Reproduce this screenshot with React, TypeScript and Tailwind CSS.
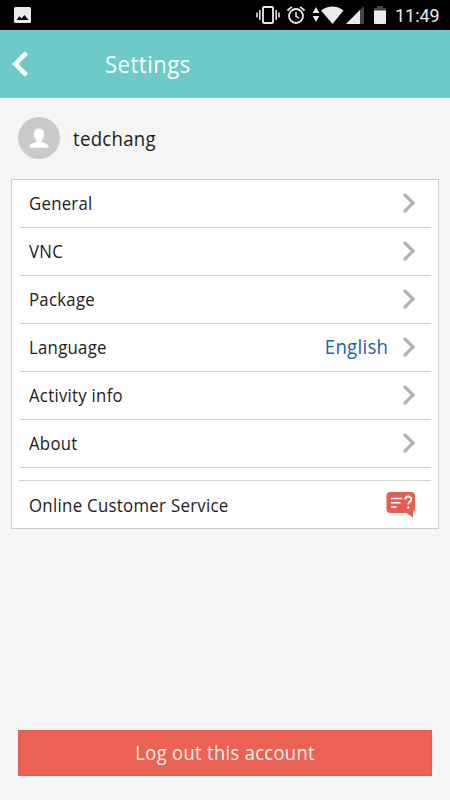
type Item = {
  label: string
  value?: string
}

const items: Item[] = [
  { label: 'General' },
  { label: 'VNC' },
  { label: 'Package' },
  { label: 'Language', value: 'English' },
  { label: 'Activity info' },
  { label: 'About' },
]

function StatusBar() {
  return (
    <div className="flex h-[30px] shrink-0 items-center bg-black pl-[14px] pr-[10px] text-[#ebebeb]">
      <svg width="17" height="16" viewBox="0 0 17 16">
        <rect width="17" height="16" rx="1.5" fill="currentColor" />
        <path d="M2.500 13l2.800-3.800 2.200 2.300L10.500 8l4 5z" fill="#000" />
      </svg>
      {/* vibrate */}
      <svg className="ml-auto" width="24" height="20" viewBox="0 0 24 20">
        <rect x="7" y="2" width="10" height="16" rx="1" fill="none" stroke="currentColor" strokeWidth="1.8" />
        <path d="M3.8 5v10M1 7.5v5M20.2 5v10M23 7.5v5" stroke="currentColor" strokeWidth="1.5" />
      </svg>
      {/* alarm */}
      <svg className="ml-[6px]" width="20" height="20" viewBox="0 0 20 20" fill="none" stroke="currentColor">
        <circle cx="10" cy="11" r="7" strokeWidth="1.8" />
        <path d="M10 7v4.3l3.2 1.9" strokeWidth="1.5" />
        <path d="M1.5 5.5l4.2-3.6M18.5 5.5l-4.2-3.6" strokeWidth="1.7" />
      </svg>
      <svg className="ml-[6px]" width="8" height="16" viewBox="0 0 8 16" fill="currentColor">
        <path d="M4 0l3.300 6H.7zM4 15L.7 9h6.600z" />
      </svg>
      <svg className="ml-[1px]" width="24" height="18" viewBox="0 0 24 18" fill="currentColor">
        <path d="M0 4.500C7-1 16-1 22.500 4.500L11.500 18z" />
      </svg>
      <svg className="ml-[1px]" width="19" height="18" viewBox="0 0 19 18">
        <path d="M18 0v18H0z" fill="#444" />
        <path d="M14 4v14H0z" fill="currentColor" />
      </svg>
      <svg className="ml-[9px]" width="12" height="18" viewBox="0 0 12 18">
        <path d="M0 2h3V0h6v2h3v3H0z" fill="#444" />
        <path d="M0 4.500h12v12.500a1 1 0 0 1-1 1H1a1 1 0 0 1-1-1z" fill="currentColor" />
      </svg>
      <span className="ml-[9px] w-[45px] origin-left scale-x-[0.97] whitespace-nowrap pt-0.5 font-['Roboto'] text-[18.5px] leading-[28px]">
        11:49
      </span>
    </div>
  )
}

function Header() {
  return (
    <header className="flex h-[68px] shrink-0 items-center bg-[#6dcac9] pl-3 text-white">
      <svg width="17" height="26" viewBox="0 0 17 26" fill="none" stroke="currentColor" strokeWidth="4.6">
        <path d="M14.500 1.800L3.300 13l11.200 11.200" />
      </svg>
      <h1 className="ml-[76px] origin-left scale-x-[0.94] text-[23.5px] leading-8 tracking-[0.5px]">
        Settings
      </h1>
    </header>
  )
}

function Chevron() {
  return (
    <svg
      className="mb-px"
      width="14"
      height="20"
      viewBox="0 0 14 20"
      fill="none"
      stroke="#b2b2b2"
      strokeWidth="3.2"
      strokeLinecap="round"
    >
      <path d="M3 2l8 8-8 8" strokeLinejoin="miter" />
    </svg>
  )
}

function ServiceIcon() {
  return (
    <svg width="30" height="26" viewBox="0 0 30 26">
      <path
        d="M4.500 0h20.500a4 4 0 0 1 4 4v12.500a4 4 0 0 1-2 3.500v5.500L20.500 21h-16a4 4 0 0 1-4-4V4a4 4 0 0 1 4-4z"
        fill="#e85d50"
      />
      <path d="M5 6.500h11M5 10.700h9.500M5 15h5.500" stroke="#fff" strokeWidth="1.600" fill="none" />
      <path
        d="M19.300 7.500c0-4 6-3.800 6-.3 0 2.500-3 2.500-3 5.300"
        fill="none"
        stroke="#fff"
        strokeWidth="1.900"
      />
      <circle cx="22.300" cy="15.500" r="1.200" fill="#fff" />
    </svg>
  )
}

export default function App() {
  return (
    <div className="flex h-[800px] w-[450px] flex-col overflow-hidden bg-[#f5f5f5] font-['Open_Sans','Noto_Sans',sans-serif] text-[#1c1c1c]">
      <StatusBar />
      <Header />

      <div className="mt-[19px] flex h-[42px] shrink-0 items-center pl-[18px]">
        <svg width="42" height="42" viewBox="0 0 42 42">
          <circle cx="21" cy="21" r="21" fill="#cacaca" />
          <path
            d="M21 11.500c3.400 0 5.200 2.300 5.200 5.700 0 2.600-1 4.800-2.500 6v1.600c1.500 1.200 6.800 1.200 7 6H11.400c.2-4.800 5.400-4.800 6.900-6v-1.600c-1.500-1.200-2.500-3.400-2.500-6 0-3.400 1.800-5.700 5.200-5.700z"
            fill="#fff"
          />
        </svg>
        <span className="ml-[13px] origin-left scale-x-[0.93] pt-0.5 text-[20px] leading-7 tracking-[0.3px]">
          tedchang
        </span>
      </div>

      <main className="mx-[11px] mt-5 border border-[#cdcdcd] bg-white px-[7px]">
        {items.map(({ label, value }) => (
          <div key={label} className="flex h-12 items-center border-b border-[#d2d2d2] pl-[10px] pr-[15px]">
            <span className="origin-left scale-x-[0.93] text-[18px] tracking-[0.3px]">{label}</span>
            {value && (
              <span className="ml-auto mr-[14px] origin-right scale-x-[0.93] pb-0.5 text-[20px] leading-7 tracking-[0.3px] text-[#1762b0]">
                {value}
              </span>
            )}
            <span className={value ? '' : 'ml-auto'}>
              <Chevron />
            </span>
          </div>
        ))}
        <div className="mt-3 flex h-12 items-center justify-between border-t border-[#d2d2d2] pl-[10px] pr-[15px]">
          <span className="origin-left scale-x-[0.935] pt-px text-[18px] tracking-[0.3px]">
            Online Customer Service
          </span>
          <ServiceIcon />
        </div>
      </main>

      <button className="mx-[18px] mb-6 mt-auto flex h-[46px] shrink-0 items-center justify-center border border-[#dc5c4e] bg-[#eb6254] text-[20px] tracking-[0.4px] text-[#fff3f1]">
        <span className="scale-x-[0.915]">Log out this account</span>
      </button>
    </div>
  )
}
